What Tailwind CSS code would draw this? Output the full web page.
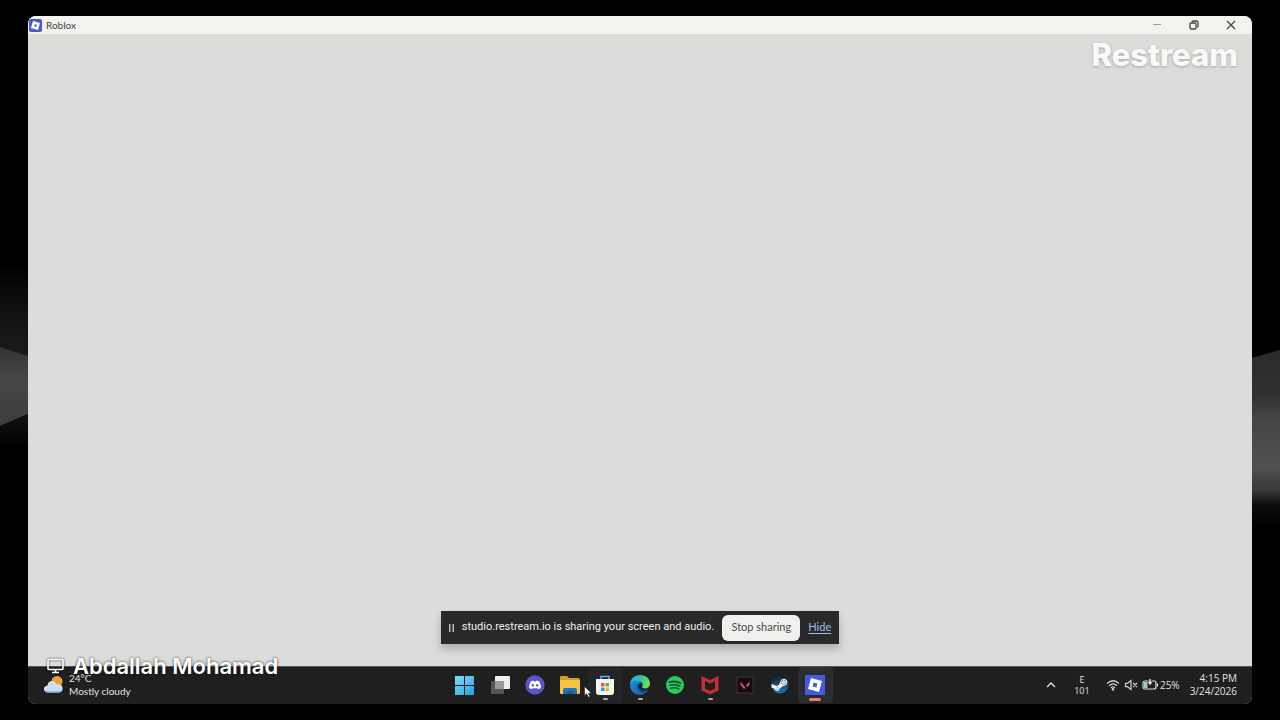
<!DOCTYPE html>
<html lang="en">
<head>
<meta charset="utf-8">
<meta name="viewport" content="width=device-width, initial-scale=1">
<title>Restream Studio</title>
<script src="https://cdn.jsdelivr.net/npm/@tailwindcss/browser@4"></script>
</head>
<body class="relative h-screen overflow-hidden bg-black px-7 py-4 font-['Lato','Open_Sans',sans-serif]">

<!-- Backdrop folds -->
<svg class="absolute inset-0 h-full w-full" viewBox="0 0 1280 720" preserveAspectRatio="none" aria-hidden="true">
  <defs>
    <linearGradient id="fadeL" x1="0" y1="0" x2="0" y2="1"><stop offset="0" stop-color="#000"/><stop offset=".5" stop-color="#10110f"/><stop offset="1" stop-color="#1b1b1a"/></linearGradient>
    <linearGradient id="foldL" x1="0" y1="0" x2="0" y2="1"><stop offset="0" stop-color="#333332"/><stop offset=".4" stop-color="#464645"/><stop offset="1" stop-color="#3d3d3c"/></linearGradient>
    <linearGradient id="lowL" x1="0" y1="0" x2="0" y2="1"><stop offset="0" stop-color="#121212"/><stop offset="1" stop-color="#000"/></linearGradient>
    <linearGradient id="foldR" x1="0" y1="0" x2="0" y2="1"><stop offset="0" stop-color="#2b2c2a"/><stop offset=".25" stop-color="#30302f"/><stop offset=".38" stop-color="#454544"/><stop offset=".65" stop-color="#50504e"/><stop offset=".78" stop-color="#383837"/><stop offset=".86" stop-color="#0d0d0c"/><stop offset="1" stop-color="#000"/></linearGradient>
  </defs>
  <path fill="url(#fadeL)" d="M0 265L28 265V356L0 347Z"/>
  <path fill="url(#foldL)" d="M0 347L28 356V414L0 426Z"/>
  <path fill="url(#lowL)" d="M0 426L28 414V445L0 450Z"/>
  <path fill="url(#foldR)" d="M1252 358L1280 350V530H1252Z"/>
</svg>

<main class="relative flex h-full flex-col overflow-hidden rounded-lg bg-[#dcdcda]">
  <header class="flex h-[18px] shrink-0 items-center justify-between bg-[#f2f2ef] pl-px pr-[14px]">
    <div class="flex items-center gap-1">
      <svg class="size-[13px]" viewBox="0 0 13 13" aria-hidden="true"><rect width="13" height="13" rx="2" fill="#4a5bd0"/><path fill="#fff" fill-rule="evenodd" d="M4 2L11 4L9 11L2 9ZM5.8 5.2L5.2 7.3L7.3 7.9L7.900 5.800Z"/></svg>
      <h1 class="text-[10px] leading-4 text-[#444]">Roblox</h1>
    </div>
    <div class="flex gap-[23px]">
      <button aria-label="Minimize" class="grid size-[14px] place-items-center text-[#999]"><svg class="size-[14px]" viewBox="0 0 14 14" stroke="currentColor"><path d="M3.500 6.500H11"/></svg></button>
      <button aria-label="Restore" class="grid size-[14px] place-items-center text-[#444]"><svg class="size-[14px]" viewBox="0 0 14 14" fill="none" stroke="currentColor" stroke-width="1.300"><rect x="3" y="5" width="6" height="6" rx="1.200"/><path d="M5 4Q5 3 6.200 3H9Q11 3 11 5V8Q11 9 10 9"/></svg></button>
      <button aria-label="Close" class="grid size-[14px] place-items-center text-[#444]"><svg class="size-[14px]" viewBox="0 0 14 14" stroke="currentColor" stroke-width="1.200"><path d="M3 3L11 11M11 3L3 11"/></svg></button>
    </div>
  </header>

  <section class="flex flex-1 items-end justify-center pb-[22px]">
    <div class="flex h-[33px] items-center whitespace-nowrap bg-[#292929] px-2 text-[11px] text-[#eee] shadow-[0_5px_8px_rgba(0,0,0,0.22)]">
      <svg class="mr-2 h-2 w-[5px]" viewBox="0 0 5 8" fill="#bbb" aria-hidden="true"><rect width="1.500" height="8"/><rect x="3.500" width="1.500" height="8"/></svg>
      <p class="font-['Roboto',sans-serif]">studio.restream.io is sharing your screen and audio.</p>
      <button class="ml-2 h-[26px] w-[78px] rounded-md bg-[#f0f0ef] text-[#4a4a4a]">Stop sharing</button>
      <a href="#" class="ml-2 text-[#a3bdf0] underline underline-offset-2">Hide</a>
    </div>
  </section>

  <footer class="grid h-[38px] shrink-0 grid-cols-[1fr_auto_1fr] items-center border-t border-[#555] bg-[#1f1f1f] pb-[2px] text-[#e0e0e0]">
    <div class="flex items-center gap-1 pl-[15px] text-[10px] leading-[13px]">
      <svg class="size-[22px]" viewBox="0 0 22 22" aria-hidden="true"><circle cx="14" cy="7.500" r="5.500" fill="#eda12d"/><path fill="#cfdef7" d="M5 18.500C-.5 18-.3 12 4.500 11.500C5 6 12 5.500 13.500 10.500C17 9.500 20 11.500 19.500 15C19.300 17.500 18 18.500 16 18.500Z"/><path fill="#8fb0ec" d="M2 16.500Q10 18 19 16.500Q18 18.500 16 18.500H5Q3 18.300 2 16.500Z"/></svg>
      <p>24°C<br>Mostly cloudy</p>
    </div>

    <nav class="flex" aria-label="Taskbar">
      <button aria-label="Start" class="grid h-9 w-[35px] place-items-center"><svg class="size-5" viewBox="0 0 20 20"><defs><linearGradient id="win" x2="1" y2="1"><stop stop-color="#86dcf8"/><stop offset="1" stop-color="#279ddc"/></linearGradient></defs><path fill="url(#win)" d="M0 1H9V10H0ZM10 1H19V10H10ZM0 11H9V20H0ZM10 11H19V20H10Z"/></svg></button>
      <button aria-label="Task view" class="grid h-9 w-[35px] place-items-center"><svg class="size-5" viewBox="0 0 20 20"><rect x="5" y="1" width="15" height="13" rx="1" fill="#eee"/><rect x="1" y="6" width="13" height="13" rx="1" fill="#555"/><path fill="#999" d="M5 6H14V14H5Z"/></svg></button>
      <button aria-label="Discord" class="grid h-9 w-[35px] place-items-center"><svg class="size-5" viewBox="0 0 20 20"><circle cx="10" cy="10" r="9.700" fill="#5c54c8"/><path fill="#fff" fill-rule="evenodd" d="M6 6.200L8.500 5.600L9 6.400H11L11.500 5.600L14 6.200C15.500 8.500 16 10.500 15.800 13L13.200 14.300L12.400 13.200H7.600L6.800 14.300L4.200 13C4 10.500 4.500 8.500 6 6.200ZM7.800 8.900A1.200 1.400 0 1 0 7.810 8.900ZM12.200 8.900A1.200 1.400 0 1 0 12.210 8.900Z"/></svg></button>
      <button aria-label="File Explorer" class="grid h-9 w-[35px] place-items-center"><svg class="size-5" viewBox="0 0 20 20"><path fill="#d79a22" d="M0 2Q0 1 1 1H7L9 3H18Q20 3 20 5V10H0Z"/><path fill="#f4c545" d="M0 5H20V18Q20 19 19 19H1Q0 19 0 18Z"/><path fill="#2472b5" d="M3 19V15Q3 13 5 13H15Q17 13 17 15V19H14V17H6V19Z"/><path fill="#176099" d="M6 16H14V19H6Z"/></svg></button>
      <button aria-label="Microsoft Store" class="relative grid h-9 w-[35px] place-items-center rounded bg-[#242426]"><svg class="size-5" viewBox="0 0 20 20"><path fill="none" stroke="#58b5e6" stroke-width="1.500" d="M6 5V1.500H14V5"/><path fill="#f4f4f4" d="M1 4H19V17Q19 20 16 20H4Q1 20 1 17Z"/><path fill="#e85b35" d="M6 8H9.500V11.500H6Z"/><path fill="#72ad35" d="M10.500 8H14V11.500H10.500Z"/><path fill="#269ed8" d="M6 12.500H9.500V16H6Z"/><path fill="#f1b42b" d="M10.500 12.500H14V16H10.500Z"/></svg><span class="absolute bottom-[3px] h-[2px] w-[5px] rounded-full bg-[#aaa]"></span></button>
      <button aria-label="Microsoft Edge" class="relative grid h-9 w-[35px] place-items-center"><svg class="size-5" viewBox="0 0 20 20"><defs><linearGradient id="edgeTop" x2="1" y2=".2"><stop stop-color="#22a4df"/><stop offset=".6" stop-color="#36c6a0"/><stop offset="1" stop-color="#74d957"/></linearGradient><linearGradient id="edgeLow" x2="1" y2="1"><stop stop-color="#1b8edb"/><stop offset="1" stop-color="#1455a2"/></linearGradient></defs><path fill="url(#edgeTop)" d="M0 10C0 4 4 0 10 0C16 0 20 4 20 8.500C20 12 17.500 13.500 15 13.500C12.500 13.500 11.500 12.500 12.300 11C13.500 8.500 11.500 6.500 8 6.500C4 6.500 1 8.500 0 10Z"/><path fill="url(#edgeLow)" d="M0 10C1 6 5 5 8 6C10 6.500 11 7.500 11 8.500C8 8 7.500 11 9 13C11 16 15 16 18.500 14.500C16.500 18 13.500 20 10 20C4 20 0 15.500 0 10Z"/><path fill="#123f78" d="M8.200 9C6 12 8 16 12 17C14.500 17.500 17 16.500 18.500 14.500C14 16 11 15 9.500 13C8.600 11.600 8.600 10 9.700 8.600Z"/></svg><span class="absolute bottom-[3px] h-[2px] w-[5px] rounded-full bg-[#aaa]"></span></button>
      <button aria-label="Spotify" class="grid h-9 w-[35px] place-items-center"><svg class="size-5" viewBox="0 0 20 20" fill="none" stroke="#174f29" stroke-linecap="round"><circle cx="10" cy="10" r="9" fill="#2bcb5c" stroke="none"/><path stroke-width="1.800" d="M4.500 7.200Q10 5.500 15.500 8"/><path stroke-width="1.500" d="M5 10.300Q10 8.900 14.700 11"/><path stroke-width="1.300" d="M5.500 13.200Q10 12 14 13.900"/></svg></button>
      <button aria-label="McAfee" class="relative grid h-9 w-[35px] place-items-center"><svg class="size-5" viewBox="0 0 20 20"><path fill="#c92a38" d="M1.500 1L10 5L18.500 1V15.500L10 19.500L1.500 15.500ZM5 6V13.500L10 16L15 13.500V6L10 8.500Z" fill-rule="evenodd"/></svg><span class="absolute bottom-[3px] h-[2px] w-[5px] rounded-full bg-[#aaa]"></span></button>
      <button aria-label="Valorant" class="grid h-9 w-[35px] place-items-center"><svg class="size-5" viewBox="0 0 20 20"><rect x="2" y="2" width="16" height="16" fill="#110d10" stroke="#4c3034"/><path fill="#d45466" d="M5.500 6.500L11 13.500H8.500L5.500 9.700ZM14.500 6.500V9.700L12.500 12L11 10.500Z"/></svg></button>
      <button aria-label="Steam" class="grid h-9 w-[35px] place-items-center"><svg class="size-5" viewBox="0 0 20 20"><defs><linearGradient id="steam" x2="0" y2="1"><stop stop-color="#172337"/><stop offset="1" stop-color="#2476a8"/></linearGradient></defs><circle cx="10" cy="10" r="8.500" fill="url(#steam)"/><path fill="#f4f7fa" d="M1.500 9L6.500 11L9 10L10.500 6.500C11 2.500 17.500 2.700 17.300 7.300C17 10 15 11 13 11L9.800 13.500C9.300 16.500 5.500 17 4.500 13.800L1.500 12.500Z"/><circle cx="13.600" cy="7.200" r="2.200" fill="#dce6ef" stroke="#6d8298" stroke-width=".8"/><path fill="none" stroke="#7895ac" stroke-width=".8" d="M5.500 14Q7.500 15.500 8.500 13.500Q8.500 11.500 6.500 12"/></svg></button>
      <button aria-label="Roblox" class="relative grid h-9 w-[35px] place-items-center rounded bg-[#2c2c2e]"><svg class="size-5" viewBox="0 0 20 20"><rect width="20" height="20" rx="1" fill="#425be0"/><path fill="#fff" fill-rule="evenodd" d="M6 3L17 6L14 17L3 14ZM8.500 7.600L7.600 11.500L11.500 12.400L12.400 8.500Z"/></svg><span class="absolute bottom-[2px] h-[3px] w-3 rounded-full bg-[#dc8177]"></span></button>
    </nav>

    <div class="flex items-center justify-end pr-[15px] font-['Open_Sans',sans-serif] text-[10px] leading-[13px]">
      <button aria-label="Show hidden icons" class="mr-[18px]"><svg class="size-[10px]" viewBox="0 0 10 10" fill="none" stroke="currentColor" stroke-width="1.400"><path d="M1 7L5 3L9 7"/></svg></button>
      <button class="mr-4 w-4 text-center text-[9px] leading-[11px]">E<br>101</button>
      <button aria-label="Network, sound and battery" class="mr-[10px] flex items-center gap-1">
        <svg class="h-3 w-[14px]" viewBox="0 0 14 12" fill="none" stroke="#ccc" stroke-width="1.200"><path d="M1 4.500Q7-1 13 4.500M3 6.700Q7 3 11 6.700M5 8.800Q7 7 9 8.800"/><circle cx="7" cy="10.300" r=".8" fill="#ccc"/></svg>
        <svg class="h-3 w-[14px]" viewBox="0 0 14 12" fill="none" stroke="#ccc" stroke-width="1.200"><path d="M1.500 4.300H3.500L7 1.500V10.500L3.500 7.700H1.500ZM9 4L13 8M13 4L9 8"/></svg>
        <span class="flex items-center gap-[2px]"><svg class="h-3 w-4" viewBox="0 0 16 12" fill="none" stroke="#ddd" stroke-width="1.200"><rect x="1" y="2" width="13" height="8" rx="2"/><path d="M15.500 4.500V7.500"/><path fill="#9fcfa9" stroke="none" d="M2 3H5.500V9H2Z"/><path stroke="#1f1f1f" stroke-width="3" d="M8 0V5"/><path stroke-width="1.500" d="M8 0V5M6.500 3L8 5L9.500 3"/></svg>25%</span>
      </button>
      <time class="text-right" datetime="2026-03-24T16:15">4:15 PM<br>3/24/2026</time>
    </div>
  </footer>

  <!-- Stream overlays -->
  <div class="absolute right-[14px] top-[21px] font-['Inter',sans-serif] text-[31px] font-extrabold leading-9 text-[#f9f9f8] [text-shadow:0_1px_3px_rgba(0,0,0,0.25)]">Restream</div>
  <div class="absolute bottom-6 left-[18px] flex items-center gap-2 whitespace-nowrap font-['Inter',sans-serif] text-[22px] font-semibold leading-7 text-white [text-shadow:0_0_3px_rgba(0,0,0,0.8)]">
    <svg class="h-4 w-[19px] drop-shadow-[0_0_1px_rgba(0,0,0,0.8)]" viewBox="0 0 19 16" fill="none" stroke="#fff" stroke-width="1.600" aria-hidden="true"><rect x="2" y="1.500" width="15" height="10" rx="1"/><path d="M9.500 11.500V14.500M6 14.500H13"/></svg>
    <span>Abdallah Mohamad</span>
  </div>
  <svg class="absolute bottom-[6px] left-[556px] h-3 w-2" viewBox="0 0 8 12" aria-hidden="true"><path fill="#fff" stroke="#222" stroke-width=".6" d="M.5 .5V9.500L2.700 7.700L4.300 11.200L5.900 10.400L4.400 7.200H7.500Z"/></svg>
</main>
</body>
</html>
